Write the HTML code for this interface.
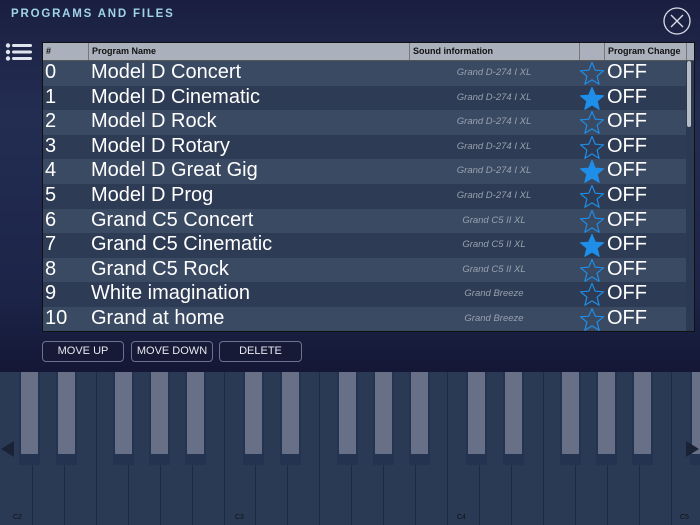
<html><head><style>
body{margin:0;width:700px;height:525px;overflow:hidden;background:#2a3a55;font-family:"Liberation Sans",sans-serif;position:relative}
.panel{position:absolute;left:0;top:0;width:700px;height:372px;background:linear-gradient(#1a1f40,#232d52 30%,#1c2448 80%,#141735);z-index:5}
.title{position:absolute;left:11px;top:8px;color:#9fd3ea;font-weight:bold;font-size:11.5px;letter-spacing:1.8px}
.tbl{position:absolute;left:42px;top:42px;width:651px;height:288px;background:#2b3a52;border:1px solid #111;overflow:hidden}
.hdr{position:absolute;left:0;top:0;width:651px;height:17px;background:#aab1bd;border-bottom:1px solid #555;font-size:9px;font-weight:bold;color:#111}
.hdr div{position:absolute;top:0;height:17px;line-height:17px;border-left:1px solid #777;padding-left:3px;box-sizing:border-box}
.row{position:absolute;left:0;width:643px;height:24.6px;color:#fff}
.row .n{position:absolute;left:2px;top:0px;font-size:20px}
.row .nm{position:absolute;left:48px;top:0px;font-size:20px}
.row .s{position:absolute;left:366px;width:170px;text-align:center;top:6px;font-size:9.5px;font-style:italic;color:#97a0ae}
.row svg{position:absolute;left:535px;top:0}
.row .o{position:absolute;left:564px;top:0px;font-size:20px}
.sb{position:absolute;left:644px;top:18px;width:4px;height:66px;background:#b8bcc4;border-radius:2px}
.btn{position:absolute;top:341px;height:19px;border:1px solid #6a7290;border-radius:4px;background:#161a36;color:#e8e8f0;font-size:11px;text-align:center;line-height:19px}
.wk{position:absolute;top:372px;height:153px;width:1px;background:#1c2a42}
.bk{position:absolute;top:372px;width:17px;height:82px;background:#677087;z-index:2}
.bs{position:absolute;top:372px;width:21px;height:93px;background:#243450;z-index:1}
.lbl{position:absolute;top:514px;font-size:7px;color:#111}
</style></head><body>
<div class="panel">
<div class="title">PROGRAMS AND FILES</div>
<svg style="position:absolute;left:662px;top:6px" width="30" height="30"><circle cx="15" cy="15" r="13" fill="none" stroke="#d8dce6" stroke-width="1.3"/><path d="M9 9L21 21M21 9L9 21" stroke="#d8dce6" stroke-width="1.4"/></svg>
<svg style="position:absolute;left:5px;top:43px" width="28" height="18" fill="#e0e4ee"><circle cx="3" cy="2.5" r="2.2"/><circle cx="3" cy="9" r="2.2"/><circle cx="3" cy="15.5" r="2.2"/><rect x="7" y="1" width="20" height="3" rx="1.5"/><rect x="7" y="7.5" width="20" height="3" rx="1.5"/><rect x="7" y="14" width="20" height="3" rx="1.5"/></svg>
<div class="tbl">
<div class="hdr"><div style="left:0;width:45px;border:none">#</div><div style="left:45px;width:321px">Program Name</div><div style="left:366px;width:170px">Sound information</div><div style="left:536px;width:25px"></div><div style="left:561px;width:82px">Program Change</div><div style="left:643px;width:8px"></div></div>
<div id="rows"></div>
<div class="sb"></div>
</div>
<div class="btn" style="left:42px;width:80px">MOVE UP</div>
<div class="btn" style="left:131px;width:80px">MOVE DOWN</div>
<div class="btn" style="left:219px;width:81px">DELETE</div>
</div>
<div id="kb"></div>
<svg style="position:absolute;left:0;top:440px;z-index:3" width="14" height="18"><path d="M1 9L14 1V17Z" fill="#1a2236"/></svg>
<svg style="position:absolute;left:685px;top:440px;z-index:3" width="14" height="18"><path d="M14 9L1 1V17Z" fill="#1a2236"/></svg>
<div class="lbl" style="left:13px">C2</div><div class="lbl" style="left:235px">C3</div><div class="lbl" style="left:457px">C4</div><div class="lbl" style="left:680px">C5</div>
<script>
var d=[["0","Model D Concert","Grand D-274 I XL",0],["1","Model D Cinematic","Grand D-274 I XL",1],["2","Model D Rock","Grand D-274 I XL",0],["3","Model D Rotary","Grand D-274 I XL",0],["4","Model D Great Gig","Grand D-274 I XL",1],["5","Model D Prog","Grand D-274 I XL",0],["6","Grand C5 Concert","Grand C5 II XL",0],["7","Grand C5 Cinematic","Grand C5 II XL",1],["8","Grand C5 Rock","Grand C5 II XL",0],["9","White imagination","Grand Breeze",0],["10","Grand at home","Grand Breeze",0]];
var h="";d.forEach(function(r,i){var t=18+i*24.6;var st='<svg width="28" height="26" viewBox="0 0 28 26"><path d="M14 1.5L17.2 9.2 25.5 9.8 19.1 15.1 21.1 23.3 14 18.9 6.9 23.3 8.9 15.1 2.5 9.8 10.8 9.2Z" fill="'+(r[3]?'#1e8ee8':'none')+'" stroke="#1e8ee8" stroke-width="1.2" stroke-linejoin="round"/></svg>';
h+='<div class="row" style="top:'+t+'px;background:'+(i%2?'#2d3b54':'#3b4a63')+'"><span class="n">'+r[0]+'</span><span class="nm">'+r[1]+'</span><span class="s">'+r[2]+'</span>'+st+'<span class="o">OFF</span></div>';});
document.getElementById('rows').innerHTML=h;
var k="",w=223.5/7;for(var j=1;j<23;j++)k+='<div class="wk" style="left:'+(j*w)+'px"></div>';
var b=[21,58,115,151,187];for(var o=0;o<4;o++)b.forEach(function(x){var L=o*223.5+x;k+='<div class="bs" style="left:'+(L-2)+'px"></div><div class="bk" style="left:'+L+'px"></div>';});
document.getElementById('kb').innerHTML=k;
</script>
</body></html>
